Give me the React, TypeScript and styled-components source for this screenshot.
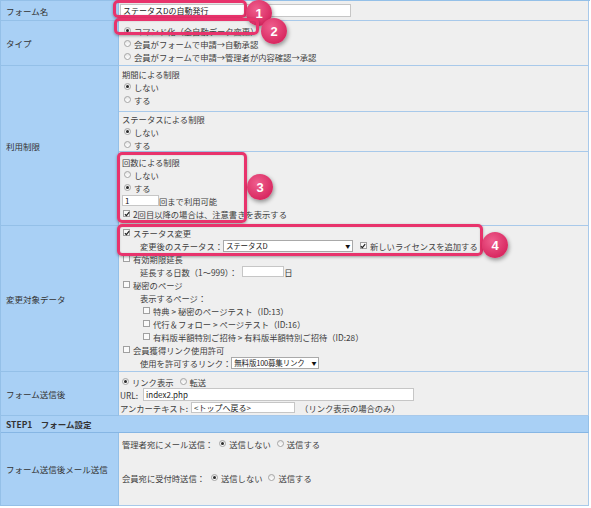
import React from "react";
import styled, { createGlobalStyle, css } from "styled-components";

export default function App() {
  return (
    <>
      <GlobalStyle />
      <Page>
        <Form>
          <Label>フォーム名</Label>
          <Cell $pad="3px 1px 3px">
            <TextBox $w={231} $h={13} defaultValue="ステータスDの自動発行" readOnly />
          </Cell>

          <Label>タイプ</Label>
          <Cell $pad="3px 3px 2px">
            <Line><Choice on>コマンド化（全自動データ変更）</Choice></Line>
            <Line><Choice>会員がフォームで申請→自動承認</Choice></Line>
            <Line><Choice>会員がフォームで申請→管理者が内容確認→承認</Choice></Line>
          </Cell>

          <Label>利用制限</Label>
          <Cell $pad="0">
            <Section $pad="1px 3px 5px">
              <Line>期間による制限</Line>
              <Line><Choice on>しない</Choice></Line>
              <Line><Choice>する</Choice></Line>
            </Section>
            <Section $pad="0 3px 0">
              <Line>ステータスによる制限</Line>
              <Line><Choice on>しない</Choice></Line>
              <Line><Choice>する</Choice></Line>
            </Section>
            <Section $pad="3px 3px 5px" $last>
              <Line>回数による制限</Line>
              <Line><Choice>しない</Choice></Line>
              <Line><Choice on>する</Choice></Line>
              <Line>
                <TextBox $w={37} $h={11} defaultValue="1" readOnly />
                回まで利用可能
              </Line>
              <Line><Tick on />2回目以降の場合は、注意書きを表示する</Line>
            </Section>
          </Cell>

          <Label>変更対象データ</Label>
          <Cell $pad="0 3px 2px">
            <Line><Tick on />ステータス変更</Line>
            <Line $indent={18}>
              変更後のステータス：
              <SelectBox $w={130}>ステータスD<Arrow>▼</Arrow></SelectBox>
              <Gap $w={6} />
              <Tick on />新しいライセンスを追加する
            </Line>
            <Line><Tick />有効期限延長</Line>
            <Line $indent={18}>
              延長する日数（1～999）：
              <Gap $w={5} />
              <TextBox $w={42} $h={11} defaultValue="" readOnly />
              日
            </Line>
            <Line><Tick />秘密のページ</Line>
            <Line $indent={18}>表示するページ：</Line>
            <Line $indent={20}><Tick />特典 &gt; 秘密のページテスト（ID:13）</Line>
            <Line $indent={20}><Tick />代行＆フォロー &gt; ページテスト（ID:16）</Line>
            <Line $indent={20}><Tick />有料版半額特別ご招待 &gt; 有料版半額特別ご招待（ID:28）</Line>
            <Line><Tick />会員獲得リンク使用許可</Line>
            <Line $indent={18}>
              使用を許可するリンク：
              <SelectBox $w={88}>無料版100募集リンク<Arrow>▼</Arrow></SelectBox>
            </Line>
          </Cell>

          <Label>フォーム送信後</Label>
          <Cell $pad="3px 1px 1px">
            <Line>
              <Choice on>リンク表示</Choice>
              <Choice>転送</Choice>
            </Line>
            <Line>
              URL:
              <Gap $w={5} />
              <TextBox $w={271} $h={13} defaultValue="index2.php" readOnly />
            </Line>
            <Line>
              アンカーテキスト:
              <Gap $w={3} />
              <TextBox $w={104} $h={11} defaultValue="<トップへ戻る>" readOnly />
              <Gap $w={5} />
              （リンク表示の場合のみ）
            </Line>
          </Cell>

          <Heading>STEP1　フォーム設定</Heading>

          <Label>フォーム送信後メール送信</Label>
          <Cell $pad="4px 3px 0">
            <MailLine>
              管理者宛にメール送信：
              <Gap $w={4} />
              <Choice on>送信しない</Choice>
              <Choice>送信する</Choice>
            </MailLine>
            <MailLine>
              会員宛に受付時送信：
              <Gap $w={4} />
              <Choice on>送信しない</Choice>
              <Choice>送信する</Choice>
            </MailLine>
          </Cell>
        </Form>

        <Mark $box={[113, 0, 134, 18]} />
        <Badge $at={[259, 13]}>1</Badge>
        <Mark $box={[114, 18, 145, 17]} />
        <Badge $at={[274, 31]}>2</Badge>
        <Mark $box={[117, 152, 130, 71]} />
        <Badge $at={[260, 187]}>3</Badge>
        <Mark $box={[117, 224, 366, 32]} />
        <Badge $at={[495, 245]}>4</Badge>
      </Page>
    </>
  );
}

function Choice({ on, children }: { on?: boolean; children: React.ReactNode }) {
  return (
    <Item>
      <Radio $on={on} />
      {children}
    </Item>
  );
}

function Tick({ on }: { on?: boolean }) {
  return (
    <CheckBox>
      {on && (
        <svg viewBox="0 0 8 8" width="6" height="6">
          <path d="M1.2 4.3 3.2 6.2 6.9 1.5" stroke="#222" strokeWidth="1.6" fill="none" />
        </svg>
      )}
    </CheckBox>
  );
}

const GlobalStyle = createGlobalStyle`
  html, body {
    margin: 0;
    padding: 0;
    background: #fff;
  }
  body {
    font-family: "Noto Sans CJK JP", "Noto Sans", sans-serif;
    font-size: 8.3px;
    color: #404040;
  }
`;

const Page = styled.div`
  position: relative;
  width: 591px;
`;

const Form = styled.div`
  display: grid;
  grid-template-columns: 118px 470px;
  border-top: 1px solid #94c0e8;
  border-left: 1px solid #94c0e8;
  width: 589px;
`;

const Label = styled.div`
  display: flex;
  align-items: center;
  padding-left: 5px;
  background: #a9d0f5;
  border-right: 1px solid #94c0e8;
  border-bottom: 1px solid #94c0e8;
  color: #333;
  font-size: 8.5px;
  white-space: nowrap;
`;

const Cell = styled.div<{ $pad: string }>`
  padding: ${(p) => p.$pad};
  background: #efefef;
  border-right: 1px solid #a8c9ea;
  border-bottom: 1px solid #a8c9ea;
`;

const Section = styled.div<{ $pad: string; $last?: boolean }>`
  padding: ${(p) => p.$pad};
  border-bottom: ${(p) => (p.$last ? "none" : "1px solid #a8c9ea")};
`;

const Line = styled.div<{ $indent?: number }>`
  display: flex;
  align-items: center;
  height: 13px;
  padding-left: ${(p) => p.$indent ?? 0}px;
  white-space: nowrap;
`;

const MailLine = styled(Line)`
  margin-bottom: 21px;
`;

const Heading = styled.div`
  grid-column: 1 / -1;
  height: 16px;
  line-height: 16px;
  padding-left: 5px;
  background: #a9d0f5;
  border-right: 1px solid #94c0e8;
  border-bottom: 1px solid #86b6e4;
  font-weight: bold;
  font-size: 8.5px;
  color: #333;
`;

const Item = styled.span`
  display: inline-flex;
  align-items: center;
  margin-right: 4px;
`;

const Radio = styled.span<{ $on?: boolean }>`
  position: relative;
  flex: none;
  width: 7px;
  height: 7px;
  box-sizing: border-box;
  margin: 0 3px 0 2px;
  border: 1px solid #a5a5a5;
  border-radius: 50%;
  background: linear-gradient(#e6e6e6, #ffffff);
  ${(p) =>
    p.$on &&
    css`
      &::after {
        content: "";
        position: absolute;
        left: 1px;
        top: 1px;
        width: 3px;
        height: 3px;
        border-radius: 50%;
        background: #2a2a2a;
      }
    `}
`;

const CheckBox = styled.span`
  display: inline-flex;
  align-items: center;
  justify-content: center;
  flex: none;
  width: 7px;
  height: 7px;
  box-sizing: border-box;
  margin: 0 3px 0 1px;
  border: 1px solid #a0a0a0;
  background: #fafafa;
  & svg {
    flex: none;
  }
`;

const TextBox = styled.input<{ $w: number; $h: number }>`
  box-sizing: border-box;
  width: ${(p) => p.$w}px;
  height: ${(p) => p.$h}px;
  margin: 0;
  padding: 0 2px;
  border: 1px solid #c6c6c6;
  border-radius: 0;
  background: #fff;
  color: #222;
  font: 8px "Noto Sans CJK JP", sans-serif;
  outline: none;
`;

const SelectBox = styled.span<{ $w: number }>`
  display: inline-flex;
  align-items: center;
  justify-content: space-between;
  box-sizing: border-box;
  width: ${(p) => p.$w}px;
  height: 12px;
  padding: 0 2px 0 2px;
  border: 1px solid #a9a9a9;
  background: #fff;
  color: #222;
  font-size: 7.5px;
  letter-spacing: -0.2px;
`;

const Arrow = styled.span`
  font-size: 5px;
  color: #111;
`;

const Gap = styled.span<{ $w: number }>`
  display: inline-block;
  width: ${(p) => p.$w}px;
  flex: none;
`;

const Mark = styled.div<{ $box: [number, number, number, number] }>`
  position: absolute;
  left: ${(p) => p.$box[0]}px;
  top: ${(p) => p.$box[1]}px;
  width: ${(p) => p.$box[2]}px;
  height: ${(p) => p.$box[3]}px;
  box-sizing: border-box;
  border: 3px solid #e8336c;
  border-radius: 5px;
  box-shadow: 0 1px 3px rgba(0, 0, 0, 0.35), inset 0 0 2px rgba(0, 0, 0, 0.15);
`;

const Badge = styled.div<{ $at: [number, number] }>`
  position: absolute;
  left: ${(p) => p.$at[0] - 13}px;
  top: ${(p) => p.$at[1] - 13}px;
  width: 26px;
  height: 26px;
  border-radius: 50%;
  display: flex;
  align-items: center;
  justify-content: center;
  background: radial-gradient(circle at 40% 35%, #ef5f8e, #d92a62 70%);
  box-shadow: 1px 2px 4px rgba(0, 0, 0, 0.4);
  color: #fff;
  font: bold 13px "Liberation Sans", Arial, sans-serif;
`;
